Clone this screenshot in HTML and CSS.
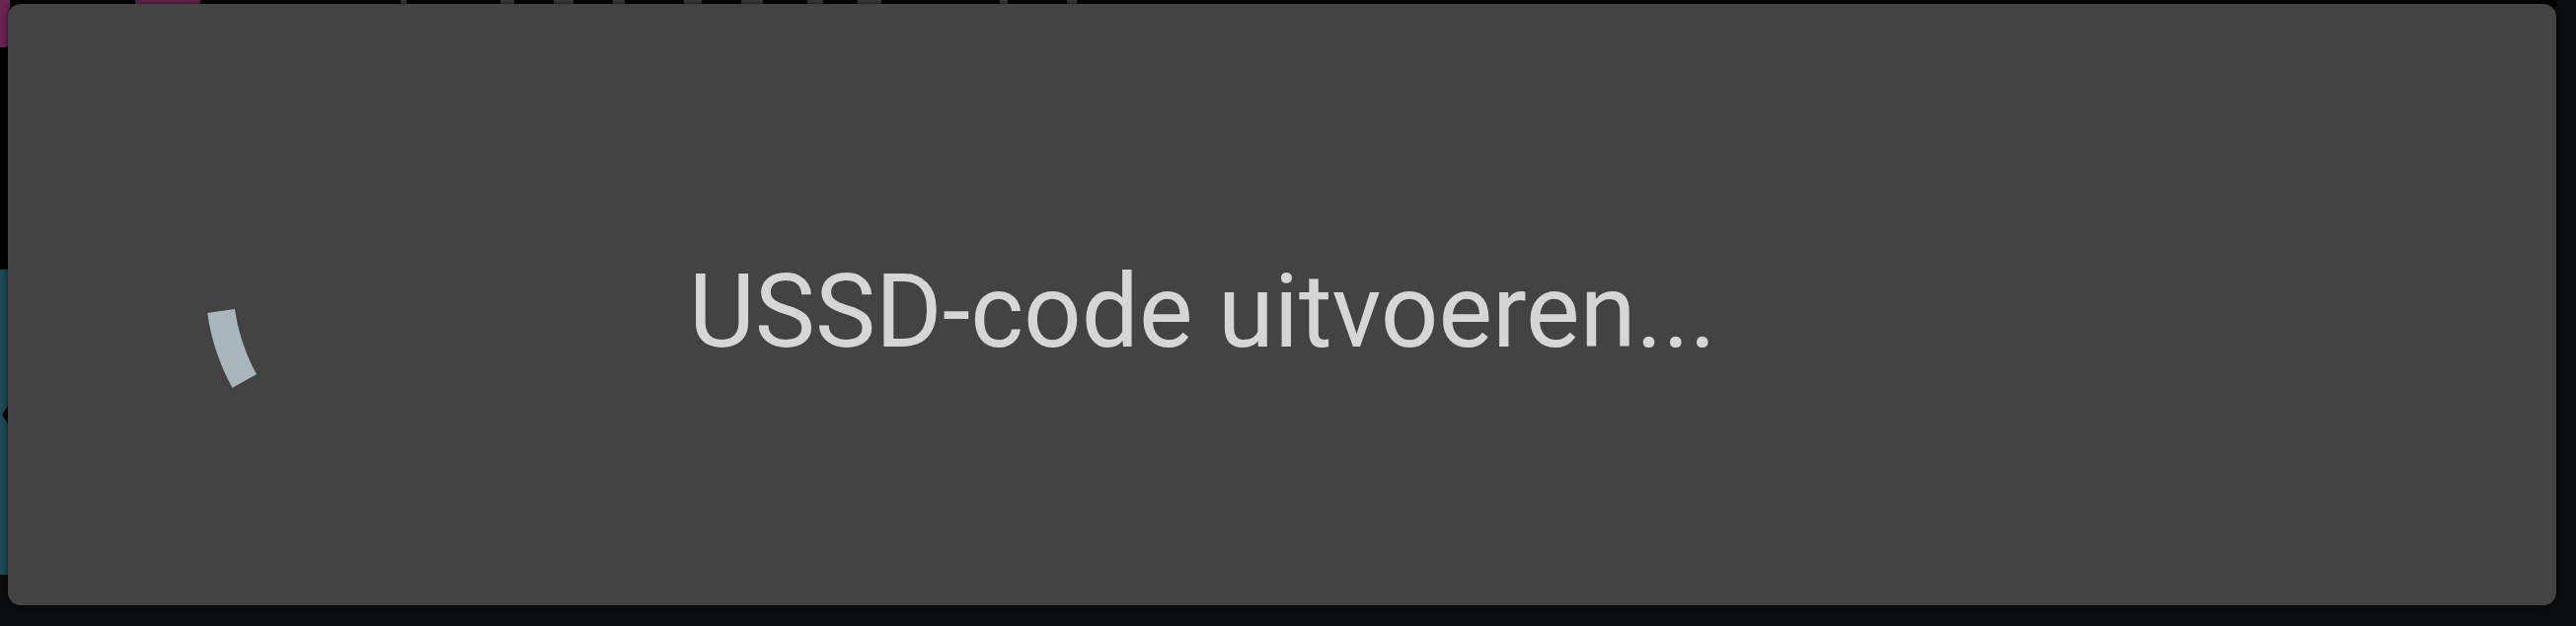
FILE: index.html
```html
<!DOCTYPE html>
<html lang="nl">
<head>
<meta charset="utf-8">
<title>USSD</title>
<link rel="stylesheet" href="styles.css">
</head>
<body>
<div class="app">
  <div class="topbar">
    <span class="tb-pink"></span>
    <span class="tb-glyphs">
      <i class="g g1"></i><i class="g g2"></i><i class="g g3"></i><i class="g g4"></i><i class="g g5"></i><i class="g g6"></i><i class="g g7"></i><i class="g g8"></i><i class="g g9"></i><i class="g g10"></i>
    </span>
  </div>
  <div class="side">
    <span class="side-pink"></span>
    <span class="side-black"></span>
    <span class="side-teal"><i class="notch"></i></span>
  </div>
</div>
<div class="dialog" role="dialog">
  <svg class="spinner" width="296" height="296" viewBox="0 0 296 296" aria-hidden="true">
    <path d="M14.0 154.0 A205 205 0 0 0 37.7 224.9" fill="none" stroke="#a9b7bd" stroke-width="28" stroke-linecap="butt"/>
  </svg>
  <span class="message">USSD-code uitvoeren...</span>
</div>
</body>
</html>
```

FILE: styles.css
```css
html, body {
  margin: 0;
  padding: 0;
}
body {
  width: 2610px;
  height: 634px;
  background: #0b0c0e;
  overflow: hidden;
  position: relative;
  font-family: Roboto, "Liberation Sans", sans-serif;
}
.app {
  width: 2610px;
  height: 634px;
  display: flex;
  flex-direction: column;
}
.topbar {
  height: 6px;
  background: #000;
  width: 2590px;
  display: flex;
  align-items: flex-start;
}
.tb-pink {
  width: 66px;
  height: 6px;
  margin-left: 137px;
  background: #6b2350;
}
.tb-glyphs {
  margin-left: 203px;
  display: flex;
  gap: 0;
  height: 6px;
}
.g {
  display: block;
  height: 6px;
  background: #3a3a3a;
}
.g1 { width: 6px; margin-right: 95px; }
.g2 { width: 14px; margin-right: 40px; }
.g3 { width: 20px; margin-right: 40px; }
.g4 { width: 12px; margin-right: 60px; }
.g5 { width: 18px; margin-right: 40px; }
.g6 { width: 22px; margin-right: 45px; }
.g7 { width: 16px; margin-right: 35px; }
.g8 { width: 24px; margin-right: 120px; }
.g9 { width: 8px; margin-right: 60px; }
.g10 { width: 10px; }
.side {
  width: 10px;
  display: flex;
  flex-direction: column;
  margin-top: -6px;
}
.side-pink {
  height: 48px;
  background: #6b2350;
  border-bottom-right-radius: 6px;
}
.side-black {
  height: 225px;
  background: #000;
}
.side-teal {
  height: 309px;
  background: #1c4a55;
  position: relative;
}
.notch {
  position: absolute;
  left: 2px;
  top: 135px;
  width: 0;
  height: 0;
  border-top: 12px solid transparent;
  border-bottom: 12px solid transparent;
  border-right: 8px solid #000;
}
.dialog {
  position: absolute;
  left: 8px;
  top: 4px;
  width: 2582px;
  height: 609px;
  box-sizing: border-box;
  background: #434343;
  border-radius: 13px;
  box-shadow: 0 0 5px 1px rgba(0, 0, 0, 0.55);
  display: flex;
  align-items: center;
  padding-left: 202px;
}
.spinner {
  flex: none;
  display: block;
}
.message {
  margin-left: 192px;
  padding-top: 14px;
  font-size: 103px;
  font-weight: 400;
  color: #d6d6d6;
  white-space: nowrap;
}
```
